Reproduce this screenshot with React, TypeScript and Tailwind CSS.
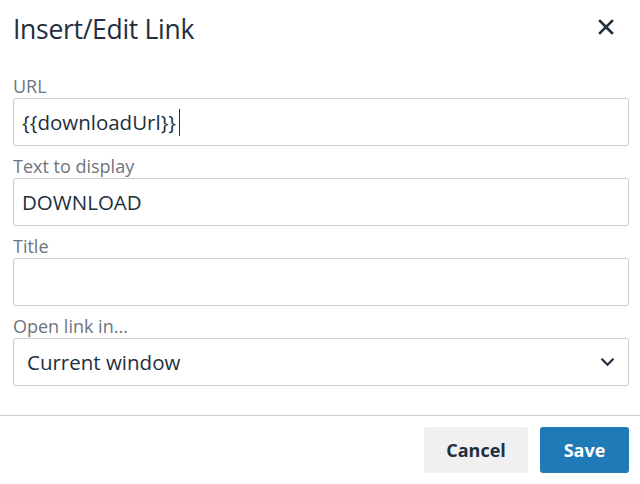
const labelCls = "block text-[18px] leading-[24px] text-[#6e757e]";
const boxCls = "flex items-center h-[48px] rounded-[3px] border border-[#cccccc] bg-white text-[20.5px] text-[#222f3e]";

function Field({ label, children, focused }: { label: string; children?: React.ReactNode; focused?: boolean }) {
  return (
    <div className="flex flex-col">
      <label className={labelCls}>{label}</label>
      <div className={`${boxCls} px-2 ${focused ? "border-[#207ab7]" : ""}`}>{children}</div>
    </div>
  );
}

export default function App() {
  return (
    <div className="w-[640px] h-[484px] bg-white flex flex-col overflow-hidden font-['Open_Sans',sans-serif] text-[#222f3e]">
      {/* Header */}
      <div className="flex items-start justify-between h-[74px] pl-[13px] pr-[22px] pt-[12px]">
        <h1 className="text-[26.5px] leading-[35px] font-normal tracking-[-0.3px]">Insert/Edit Link</h1>
        <button className="mt-[3px] w-[24px] h-[24px] flex items-center justify-center" aria-label="Close">
          <svg width="16" height="16" viewBox="0 0 16 16" fill="none">
            <path d="M2 2L14 14M14 2L2 14" stroke="#222f3e" strokeWidth="2.6" strokeLinecap="square" />
          </svg>
        </button>
      </div>

      {/* Body */}
      <div className="flex flex-col gap-2 pl-[13px] pr-[11px]">
        <Field label="URL" focused>
          <span className="leading-none">{"{{downloadUrl}}"}</span>
          <span className="ml-[3px] w-px h-[27px] bg-[#222f3e]" />
        </Field>
        <Field label="Text to display">
          <span className="leading-none">DOWNLOAD</span>
        </Field>
        <Field label="Title" />
        <div className="flex flex-col">
          <label className={labelCls}>Open link in...</label>
          <div className={`${boxCls} justify-between pl-[13px] pr-[13px]`}>
            <span className="leading-none">Current window</span>
            <svg width="15" height="10" viewBox="0 0 15 10" fill="none">
              <path d="M1.5 1.8L7.5 7.8L13.5 1.8" stroke="#222f3e" strokeWidth="2.2" />
            </svg>
          </div>
        </div>
      </div>

      {/* Footer */}
      <div className="mt-[29px] border-t border-[#cccccc] flex justify-end gap-3 pt-[11px] pr-[11px]">
        <button className="h-[46px] w-[104px] rounded-[3px] bg-[#f0f0f0] text-[18px] font-bold text-[#222f3e]">
          Cancel
        </button>
        <button className="h-[46px] w-[89px] rounded-[3px] bg-[#207ab7] text-[18px] font-bold text-white">
          Save
        </button>
      </div>
    </div>
  );
}
